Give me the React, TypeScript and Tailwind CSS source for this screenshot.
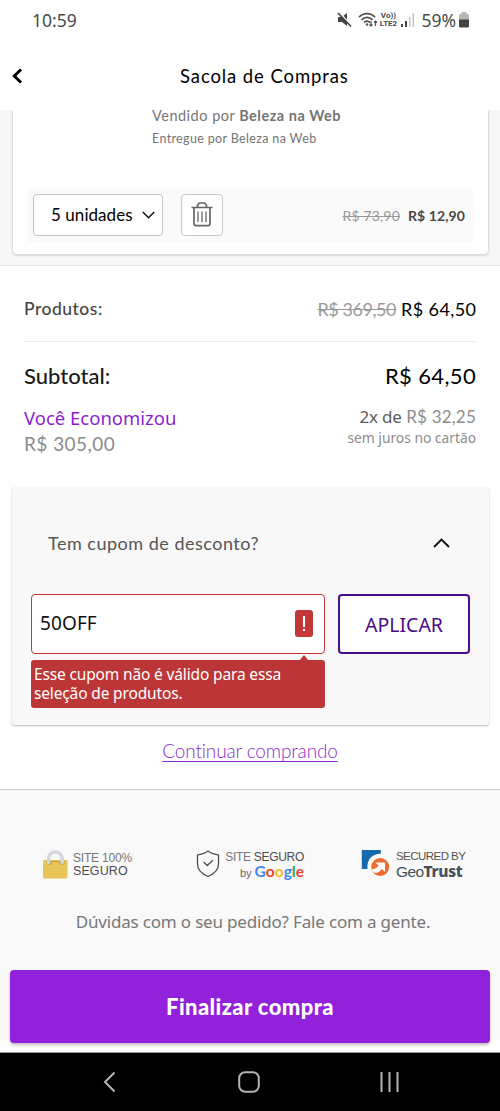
import React from "react";

function StatusBar() {
  return (
    <div className="flex h-[41px] items-center justify-between pl-8 pr-[31px] font-['Noto_Sans',sans-serif] text-[#4a4a4a]">
      <span className="text-[17.5px] leading-none">10:59</span>
      <div className="flex items-center">
        <svg width="15" height="16" viewBox="0 0 15 16" className="mr-1.5">
          <path d="M1 5h4l5-4v13l-5-4H1z" fill="#444" />
          <path d="M1.500 0l14 14" stroke="#fff" strokeWidth="1.500" />
          <path d="M1 1l13 13.5" stroke="#444" strokeWidth="1.700" />
        </svg>
        <svg width="20" height="16" viewBox="0 0 20 16" fill="none" stroke="#505050" strokeWidth="1.700">
          <path d="M1 5.2C5.500 .5 12.500 .5 17 5.200M3.500 7.800c3.300-3.200 7.800-3.200 11 0M6 10.500c1.800-1.600 4-1.700 6 0" />
          <circle cx="9" cy="12.500" r="1.200" fill="#505050" stroke="none" />
          <path d="M13 9v5M11.500 12.500L13 14l1.500-1.500M17.500 14V9M16 10.500L17.500 9l1.500 1.500" strokeWidth="1.200" />
        </svg>
        <div className="flex w-[20px] flex-col items-center font-['Roboto',sans-serif] text-[8px] font-bold leading-[8px]">
          <span className="block h-[8px]">Vo))</span>
          <span className="block h-[8px]">LTE2</span>
        </div>
        <svg width="14" height="14" viewBox="0 0 14 14" className="ml-[3px] mr-[6px]">
          <path d="M0 11h2v3H0zM4 8h2v6H4z" fill="#444" />
          <path d="M8 4h1.500v10H8zM11.500 0H13v14h-1.500z" fill="#c4c4c4" />
        </svg>
        <span className="text-[17.5px] leading-none">59%</span>
        <svg width="10" height="16" viewBox="0 0 10 16" className="ml-[3px]">
          <path d="M2.500 0h5v2H9q1 0 1 1v5H0V3q0-1 1-1h1.500z" fill="#b8b8b8" />
          <path d="M0 7.500h10V14q0 1.500-1.500 1.500h-7Q0 15.500 0 14z" fill="#444" />
        </svg>
      </div>
    </div>
  );
}

function Header() {
  return (
    <header className="flex h-[69px] items-center pt-[1px]">
      <svg width="12" height="16" viewBox="0 0 12 16" className="ml-[11px]" fill="none" stroke="#000" strokeWidth="3">
        <path d="M10 1.500L3.300 8l6.700 6.500" />
      </svg>
      <h1 className="ml-[157px] whitespace-nowrap text-[18.5px] leading-none tracking-[0.9px] text-black">Sacola de Compras</h1>
    </header>
  );
}

function TrashIcon() {
  return (
    <svg width="22" height="25" viewBox="0 0 22 25" fill="none" stroke="#666" strokeWidth="1.700">
      <path d="M.5 5.500h21M6.500 5V3.200L8.300 1h5.400l1.800 2.200V5M3 5.500v16Q3 23.600 5 23.600h12q2 0 2-2.100v-16" />
      <path d="M7 9.500v10.500M11 9.500v10.500M15 9.500v10.500" stroke="#777" strokeWidth="1.500" />
    </svg>
  );
}

function ProductCard() {
  return (
    <section className="h-[156px] border-b border-[#e6e6e6] bg-[#f7f7f7] pl-[13px] pr-[12px]">
      <div className="h-[144px] rounded-b-[4px] bg-white px-[15px] shadow-[0_1px_2px_1px_rgba(0,0,0,0.13)] [clip-path:inset(0_-4px_-5px_-4px)]">
        <div className="h-[78px] pl-[124px] text-[#757575]">
          <p className="whitespace-nowrap text-[14.5px] leading-[12px] tracking-[0.5px]">
            Vendido por <b className="font-bold">Beleza na Web</b>
          </p>
          <p className="mt-[11px] whitespace-nowrap text-[12.5px] leading-[12px] tracking-[0.35px]">Entregue por Beleza na Web</p>
        </div>
        <div className="flex h-[54px] items-center bg-[#fafafa] pl-[5px] pr-[8px]">
          <div className="flex h-[42px] w-[130px] items-center rounded-[4px] border border-[#c4c4c4] bg-white pl-[17px]">
            <span className="whitespace-nowrap text-[17px] leading-none tracking-[0.05px] text-black">5 unidades</span>
            <svg width="13" height="8" viewBox="0 0 13 8" className="ml-[9px]" fill="none" stroke="#111" strokeWidth="1.500">
              <path d="M.8 1l5.700 5.700L12.200 1" />
            </svg>
          </div>
          <div className="ml-[18px] flex h-[42px] w-[42px] items-center justify-center rounded-[4px] border border-[#c8c8c8] bg-white">
            <TrashIcon />
          </div>
          <div className="ml-auto mt-[3px] flex gap-[8px] whitespace-nowrap text-[14px] leading-none">
            <s className="tracking-[0.15px] text-[#999]">R$ 73,90</s>
            <b className="font-bold tracking-[0.1px] text-[#484848]">R$ 12,90</b>
          </div>
        </div>
      </div>
    </section>
  );
}

function Summary() {
  return (
    <section className="px-[24px]">
      <div className="flex h-[76px] items-center justify-between whitespace-nowrap border-b border-[#ededed] pt-[12px] leading-none">
        <span className="text-[17.5px] font-medium tracking-[0.5px] text-[#444]">Produtos:</span>
        <span className="flex items-center gap-[5px] text-[18px]">
          <s className="tracking-[-0.45px] text-[#999]">R$ 369,50</s>
          <span className="-mr-[0.4px] tracking-[0.4px] text-black">R$ 64,50</span>
        </span>
      </div>
      <div className="flex h-[145px] justify-between whitespace-nowrap pt-[19px]">
        <div>
          <p className="h-[29px] text-[22px] font-medium leading-[29px] text-[#1a1a1a]">Subtotal:</p>
          <p className="mt-[14px] h-[26px] font-['Noto_Sans',sans-serif] text-[18.500px] leading-[27px] text-[#8b1fd1]">Você Economizou</p>
          <p className="text-[19px] leading-[28px] tracking-[0.45px] text-[#8c8c8c]">R$ 305,00</p>
        </div>
        <div className="text-right">
          <p className="h-[29px] text-[22px] leading-[29px] tracking-[0.35px] text-black">R$ 64,50</p>
          <p className="mt-[14px] h-[23px] text-[17px] leading-[26px] tracking-[0.2px] text-[#8c8c8c]">
            <span className="font-['Noto_Sans',sans-serif] tracking-[-0.2px] text-[#5c5c5c]">2x de</span> R$ 32,25
          </p>
          <p className="font-['Noto_Sans',sans-serif] text-[13.800px] leading-[21px] text-[#8c8c8c]">sem juros no cartão</p>
        </div>
      </div>
    </section>
  );
}

function Coupon() {
  return (
    <section className="ml-[12px] mr-[11px] h-[239px] rounded-[3px] bg-[#f8f8f8] px-[19px] shadow-[0_1px_2px_rgba(0,0,0,0.28)]">
      <div className="flex h-[107px] items-center justify-between pl-[17px] pr-[20px] pt-[6px]">
        <span className="whitespace-nowrap text-[18px] leading-none tracking-[0.5px] text-[#555]">Tem cupom de desconto?</span>
        <svg width="17" height="10" viewBox="0 0 17 10" fill="none" stroke="#111" strokeWidth="1.900">
          <path d="M1 9l7.500-7.500L16 9" />
        </svg>
      </div>
      <div className="flex gap-[13px] font-['Noto_Sans',sans-serif]">
        <div className="w-[294px]">
          <div className="flex h-[60px] items-center justify-between rounded-[4px] border border-[#c8363a] bg-white pl-[8px] pr-[11px]">
            <span className="text-[19px] leading-none tracking-[0.1px] text-[#111]">50OFF</span>
            <span className="flex h-[27px] w-[18px] items-center justify-center rounded-[3px] bg-[#c1373a]">
              <svg width="4" height="17" viewBox="0 0 4 17" fill="#fff">
                <path d="M1 1h2v11H1zM1 14h2v2H1z" />
              </svg>
            </span>
          </div>
          <div className="relative mt-[6px] h-[48px] rounded-[3px] bg-[#bd3637] pl-[3px] pt-[5px] text-[15.500px] leading-[19px] tracking-[-0.15px] text-white">
            <svg width="10" height="6" viewBox="0 0 10 6" className="absolute -top-[5px] left-[268px]">
              <path d="M0 6L5 0l5 6z" fill="#bd3637" />
            </svg>
            <p className="whitespace-nowrap">Esse cupom não é válido para essa</p>
            <p className="whitespace-nowrap">seleção de produtos.</p>
          </div>
        </div>
        <button className="h-[60px] w-[132px] rounded-[4px] border-2 border-[#4b0c88] bg-white pt-[2px] text-[19.500px] leading-none text-[#4b0c88]">APLICAR</button>
      </div>
    </section>
  );
}

function Badges() {
  return (
    <div className="flex h-[32px] items-start whitespace-nowrap font-['Liberation_Sans',sans-serif] text-[#4d4d4d]">
      <div className="ml-[43px] flex w-[153px] items-start">
        <svg width="25" height="29" viewBox="0 0 25 29">
          <path d="M0 11q0-1 1-1h22.500q1 0 1 1v16q0 1.500-1.500 1.500H1.500Q0 28.500 0 27z" fill="#e9c558" />
          <path d="M3 11q0 4 3 4t3-3h7q0 3 3 3t3-4z" fill="#c7a544" />
          <path d="M5.500 12.500V9Q6 2 12.300 2 18.600 2 19.200 9v3.500" fill="none" stroke="#d8d7e0" strokeWidth="3.600" strokeLinecap="round" />
        </svg>
        <div className="ml-[5px] pt-[2px] text-[12px] leading-[13px]">
          <p className="tracking-[-0.2px] text-[#777]">SITE 100%</p>
          <p className="text-[12.500px] tracking-[0.1px]">SEGURO</p>
        </div>
      </div>
      <div className="flex w-[165px] items-start">
        <svg width="24" height="28" viewBox="0 0 24 28" fill="none" stroke="#4d4d4d" strokeWidth="1.300" strokeLinejoin="round">
          <path d="M12 1Q16.500 4.500 22.500 4.800V14Q22.500 22 12 26.500 1.500 22 1.500 14V4.800Q7.500 4.500 12 1z" />
          <path d="M8 12.500l3.300 3 5.200-5" strokeLinecap="round" />
        </svg>
        <div className="ml-[5px] w-[79px] text-right">
          <p className="text-[12px] leading-[14px] tracking-[-0.3px]">
            <span className="text-[#777]">SITE</span> SEGURO
          </p>
          <p className="flex items-baseline justify-end text-[11px] leading-[14px] text-[#666]">
            by
            <span className="ml-[3px] flex font-['Lato',sans-serif] text-[15.500px] font-bold">
              <span className="text-[#4285f4]">G</span>
              <span className="text-[#e94335]">o</span>
              <span className="text-[#f8bb15]">o</span>
              <span className="text-[#4285f4]">g</span>
              <span className="text-[#34a853]">l</span>
              <span className="text-[#e94335]">e</span>
            </span>
          </p>
        </div>
      </div>
      <div className="flex items-start">
        <svg width="29" height="27" viewBox="0 0 29 27">
          <path d="M.8 0h19v4.500Q10 5.500 8 19H.8z" fill="#1769ad" />
          <path d="M6.500 19.500Q5 5 19.800 3.500V9l-10 11z" fill="#fafafa" />
          <circle cx="19.200" cy="17" r="9" fill="#ee6a2e" />
          <path d="M14.500 12.500H24V22l-3-3-3.500 3.200q-3 1.800-6.500-.7 4.500.3 6.500-6z" fill="#fafafa" />
          <path d="M10.200 19.500q4 0 7.300-3.800l2 2q-4 4.500-8.500 3.800z" fill="#fafafa" />
        </svg>
        <div className="ml-[6px]">
          <p className="text-[11.500px] leading-[13px] tracking-[-0.55px] text-[#555]">SECURED BY</p>
          <p className="text-[15.500px] leading-[17px] tracking-[-0.6px] text-[#45525b]">
            Geo<b className="font-['Noto_Sans',sans-serif] font-extrabold tracking-[-0.3px]">Trust</b>
          </p>
        </div>
      </div>
    </div>
  );
}

function AndroidNav() {
  return (
    <nav className="flex h-[59px] items-center border-t border-[#999] bg-black pb-[1px]">
      <svg width="14" height="22" viewBox="0 0 14 22" className="ml-[102px]" fill="none" stroke="#b5b5b5" strokeWidth="2">
        <path d="M12.500 1.500L3 11l9.500 9.500" />
      </svg>
      <svg width="22" height="22" viewBox="0 0 22 22" className="ml-[122px]" fill="none" stroke="#b5b5b5" strokeWidth="2">
        <rect x="1.200" y="1.200" width="19.600" height="19.600" rx="6" />
      </svg>
      <svg width="20" height="22" viewBox="0 0 20 22" className="ml-[120px]" fill="none" stroke="#b5b5b5" strokeWidth="2">
        <path d="M1.500 1v20M9.500 1v20M17.500 1v20" />
      </svg>
    </nav>
  );
}

export default function App() {
  return (
    <main className="flex h-[1111px] w-[500px] flex-col overflow-hidden bg-white font-['Lato',sans-serif]">
      <StatusBar />
      <Header />
      <ProductCard />
      <Summary />
      <Coupon />
      <div className="flex h-[64px] justify-center pt-[14px]">
        <a className="whitespace-nowrap text-[19px] font-light leading-[24px] tracking-[-0.15px] text-[#8b2bc9] underline decoration-1 underline-offset-[3px]">Continuar comprando</a>
      </div>
      <footer className="h-[251px] border-t border-[#cfcfcf] bg-[#f9f9f9] pt-[60px]">
        <Badges />
        <p className="mt-[28px] whitespace-nowrap pl-[6px] text-center font-['Noto_Sans',sans-serif] text-[17px] leading-[24px] tracking-[-0.18px] text-[#777]">
          Dúvidas com o seu pedido? Fale com a gente.
        </p>
        <div className="px-[10px] pt-[36px]">
          <button className="block h-[73px] w-full rounded-[4px] bg-[#9121db] text-[22px] font-black leading-none tracking-[0.4px] text-white shadow-[0_2px_3px_rgba(0,0,0,0.25)]">Finalizar compra</button>
        </div>
      </footer>
      <div className="h-[12px]" />
      <AndroidNav />
    </main>
  );
}
